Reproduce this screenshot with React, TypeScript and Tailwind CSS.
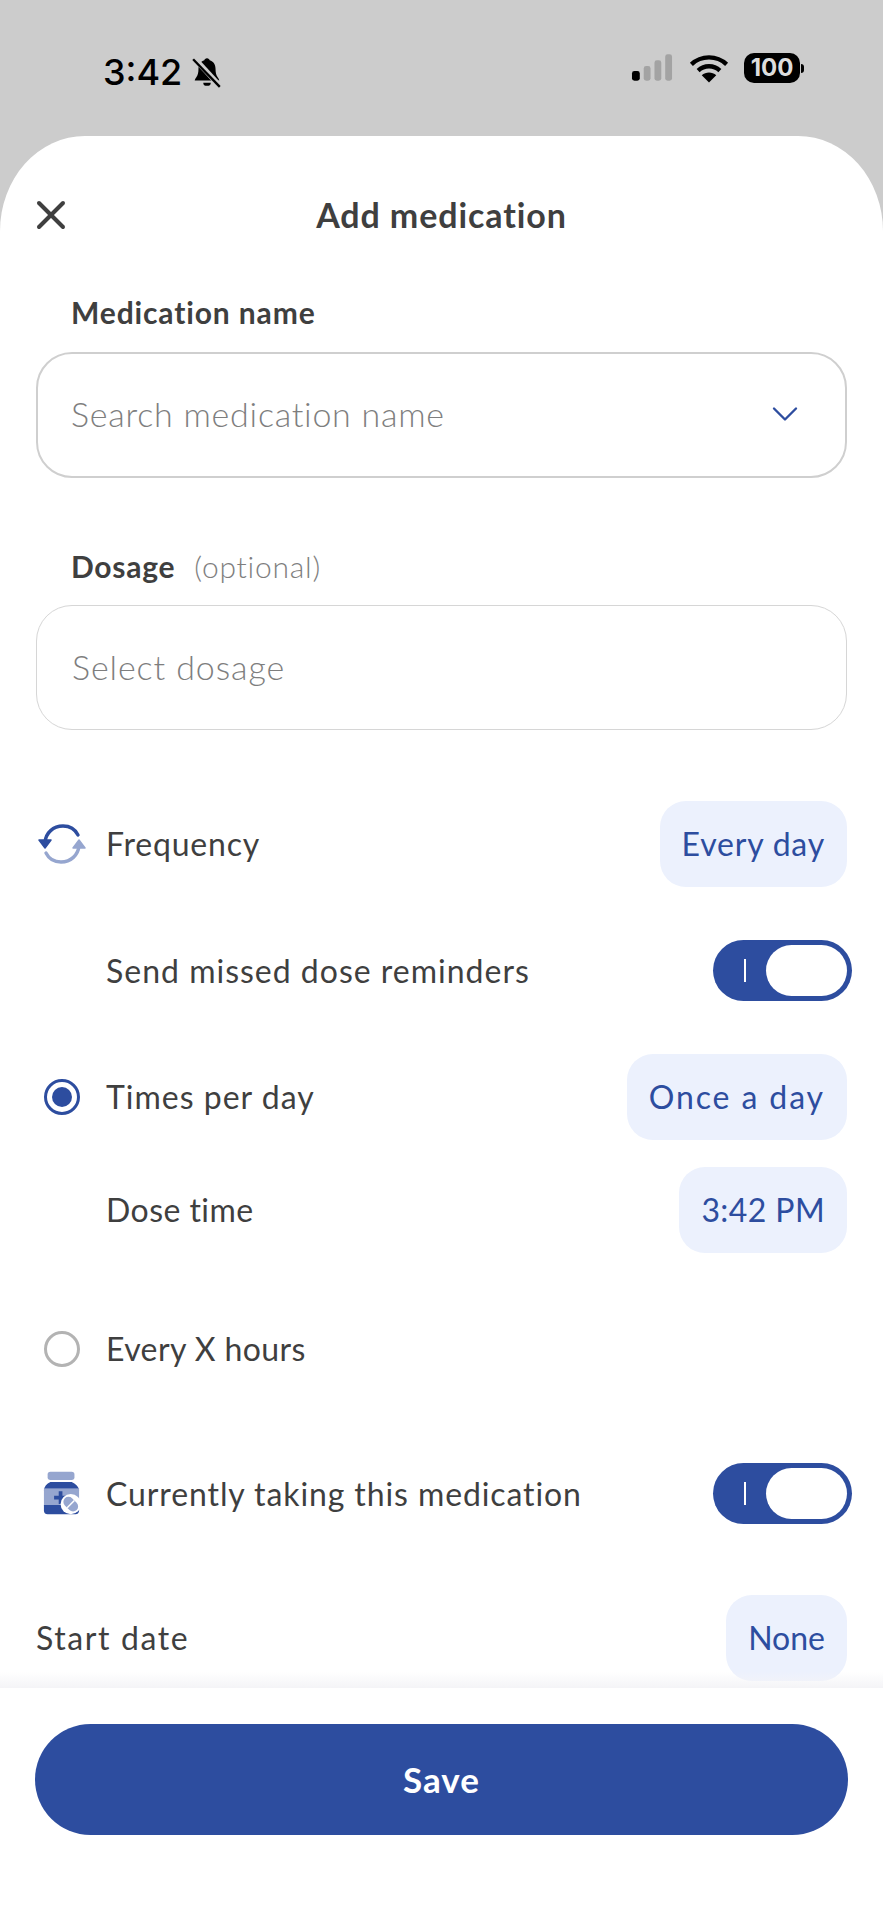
import { X, ChevronDown } from 'lucide-react';

const BLUE = 'text-[#2d4d9f]';

const Pill = ({ children, className }: { children: string; className?: string }) => (
  <div className={`h-[86px] px-[22px] flex items-center rounded-[26px] bg-[#ecf1fd] text-[32px] ${BLUE} ${className ?? ''}`}>{children}</div>
);

const Toggle = () => (
  <div className="relative w-[139px] h-[61px] -mr-[5px] rounded-full bg-[#2d4d9f] flex items-center justify-end pr-[5px]">
    <span className="absolute left-[31px] top-[19px] w-[2px] h-[23px] bg-white" />
    <span className="w-[81px] h-[51px] rounded-full bg-white" />
  </div>
);

const IconSlot = ({ children }: { children?: React.ReactNode }) => (
  <div className="w-[70px] shrink-0 flex items-center justify-center pr-[18px]">{children}</div>
);

const RepeatIcon = () => (
  <svg width="48" height="48" viewBox="0 0 48 48" fill="none">
    <path d="M40 15C37 9 31 6 25 6 15 6 8 13 7 22" stroke="#2d4d9f" strokeWidth="3.4" strokeLinecap="round" />
    <path d="M1 20h12l-6 8z" fill="#2d4d9f" stroke="#2d4d9f" strokeWidth="1.5" strokeLinejoin="round" />
    <path d="M8 33c3 6 9 9 15 9 10 0 17-7 18-16" stroke="#96a6cf" strokeWidth="3.4" strokeLinecap="round" />
    <path d="M35 28h12l-6-8z" fill="#96a6cf" stroke="#96a6cf" strokeWidth="1.5" strokeLinejoin="round" />
  </svg>
);

const BottleIcon = () => (
  <svg className="-ml-[2px] -mt-[2px]" width="37" height="44" viewBox="0 0 40 46">
    <rect x="5" y="0" width="29" height="9" rx="3" fill="#96a6cf" />
    <path d="M8 11h23c4 2 8 5 8 10H1c0-5 3-8 7-10z" fill="#2d4d9f" />
    <rect x="1" y="18" width="38" height="19" fill="#96a6cf" />
    <path d="M1 36h38v6a4 4 0 0 1-4 4H5a4 4 0 0 1-4-4z" fill="#2d4d9f" />
    <path d="M17 21h4v5h5v4h-5v5h-4v-5h-5v-4h5z" fill="#2d4d9f" />
    <circle cx="30" cy="35" r="11" fill="#fff" />
    <g transform="rotate(45 30 35)">
      <rect x="21" y="29.5" width="18" height="11" rx="5.5" fill="#96a6cf" />
      <rect x="29.2" y="29.5" width="1.6" height="11" fill="#fff" />
    </g>
  </svg>
);

const BellOffIcon = () => (
  <svg width="32" height="32" viewBox="0 0 30 30">
    <path d="M15 2c1.4 0 2.3.9 2.5 2 3.5 1 5.500 4 5.500 8 0 3 .5 6 2 8 1 1.200 1.500 2.500 1.500 3H3.500c0-.5.5-1.800 1.500-3 1.500-2 2-5 2-8 0-4 2-7 5.500-8 .2-1.100 1.100-2 2.500-2z" fill="#000" />
    <path d="M11.500 25h7a3.500 3 0 0 1-7 0z" fill="#000" />
    <path d="M3 2l24 26" stroke="#ccc" strokeWidth="5" />
    <path d="M2 3l25 26" stroke="#000" strokeWidth="2.200" />
  </svg>
);

const SignalIcon = () => (
  <svg width="43" height="28" viewBox="0 0 44 28">
    <rect x="1" y="17" width="8" height="10" rx="2.500" fill="#000" />
    <rect x="13" y="12" width="7" height="15" rx="2.500" fill="#a3a3a3" />
    <rect x="24" y="6" width="7" height="21" rx="2.500" fill="#a3a3a3" />
    <rect x="35" y="0" width="7" height="27" rx="2.500" fill="#a3a3a3" />
  </svg>
);

const WifiIcon = () => (
  <svg width="40" height="29" viewBox="0 0 38 28" fill="none">
    <path d="M2 10c9.500-9 24.500-9 34 0" stroke="#000" strokeWidth="4.200" />
    <path d="M8.500 16c6-5.500 15-5.500 21 0" stroke="#000" strokeWidth="4.200" />
    <path d="M12 20.500c4-3.400 10-3.400 14 0L19 27.500z" fill="#000" />
  </svg>
);

export default function App() {
  return (
    <div className="h-[1920px] overflow-hidden bg-[#cccccc] font-['Lato',sans-serif] text-[#3f3f3f]">
      {/* status bar */}
      <div className="h-[136px] flex items-start justify-between pt-[53px] pl-[103px] pr-[79px]">
        <div className="flex items-center gap-[9px]">
          <span className="text-[36px] leading-[38px] font-medium text-black font-['Inter',sans-serif]">3:42</span>
          <BellOffIcon />
        </div>
        <div className="flex items-center gap-[15px]">
          <SignalIcon />
          <WifiIcon />
          <div className="flex items-center">
            <div className="w-[56px] h-[30px] rounded-[10px] bg-black text-[#dddddd] text-[24px] leading-[30px] font-bold text-center font-['Inter',sans-serif]">100</div>
            <span className="w-[3px] h-[9px] ml-[1px] rounded-r-full bg-black" />
          </div>
        </div>
      </div>

      {/* sheet */}
      <div className="h-[1784px] rounded-t-[85px_95px] bg-white pt-[50px] flex flex-col">
        <div className="relative h-[58px] flex items-center justify-center pb-[2px]">
          <X className="absolute left-[27px] top-[5px] w-[48px] h-[48px] text-[#3f3f3f]" strokeWidth={2} />
          <span className="text-[34px] font-bold tracking-[0.9px]">Add medication</span>
        </div>

        <div className="flex-1 px-[36px] flex flex-col">
          <div className="mt-[49px] h-[40px] pl-[35px] pb-[2px] flex items-center text-[30px] font-bold tracking-[0.87px]">Medication name</div>
          <div className="mt-[19px] h-[126px] pl-[33px] pr-[38px] pb-[3px] flex items-center justify-between rounded-[36px] border-2 border-[#cfcfcf] text-[34px] text-[#7e7e7e] font-light tracking-[0.75px]">
            <span>Search medication name</span>
            <ChevronDown className="w-[44px] h-[44px] text-[#2d4d9f]" strokeWidth={1.3} />
          </div>

          <div className="mt-[69px] h-[40px] pl-[35px] pb-[2px] flex items-center text-[30px] tracking-[0.75px]">
            <span className="font-bold">Dosage</span>
            <span className="ml-[19px] font-light text-[#7e7e7e]">(optional)</span>
          </div>
          <div className="mt-[18px] h-[125px] pl-[35px] pb-[3px] flex items-center rounded-[36px] border border-[#d6d6d6] text-[34px] text-[#7e7e7e] font-light tracking-[0.9px]">
            Select dosage
          </div>

          <div className="mt-[71px] h-[86px] flex items-center justify-between text-[32px]">
            <div className="flex items-center">
              <IconSlot><RepeatIcon /></IconSlot>
              <span className="tracking-[0.8px]">Frequency</span>
            </div>
            <Pill className="tracking-[0.8px]">Every day</Pill>
          </div>

          <div className="mt-[53px] h-[61px] flex items-center justify-between text-[32px]">
            <div className="flex items-center">
              <IconSlot />
              <span className="tracking-[1px]">Send missed dose reminders</span>
            </div>
            <Toggle />
          </div>

          <div className="mt-[53px] h-[86px] flex items-center justify-between text-[32px]">
            <div className="flex items-center">
              <IconSlot>
                <span className="w-[36px] h-[36px] rounded-full border-[3px] border-[#2d4d9f] flex items-center justify-center">
                  <span className="w-[20px] h-[20px] rounded-full bg-[#2d4d9f]" />
                </span>
              </IconSlot>
              <span className="tracking-[1px]">Times per day</span>
            </div>
            <Pill className="tracking-[1.9px]">Once a day</Pill>
          </div>

          <div className="mt-[27px] h-[86px] flex items-center justify-between text-[32px]">
            <div className="flex items-center">
              <IconSlot />
              <span className="tracking-[0.45px]">Dose time</span>
            </div>
            <Pill className="tracking-[0.4px]">3:42 PM</Pill>
          </div>

          <div className="mt-[66px] h-[60px] flex items-center text-[32px]">
            <IconSlot>
              <span className="w-[36px] h-[36px] rounded-full border-[3px] border-[#b3b3b3]" />
            </IconSlot>
            <span className="tracking-[0.4px]">Every X hours</span>
          </div>

          <div className="mt-[84px] h-[61px] flex items-center justify-between text-[32px]">
            <div className="flex items-center">
              <IconSlot><BottleIcon /></IconSlot>
              <span className="tracking-[0.9px]">Currently taking this medication</span>
            </div>
            <Toggle />
          </div>

          <div className="mt-[71px] h-[86px] flex items-center justify-between text-[32px]">
            <span className="tracking-[1.6px]">Start date</span>
            <Pill>None</Pill>
          </div>
        </div>

        {/* footer */}
        <div className="relative h-[232px] bg-white px-[35px] pt-[36px]">
          <div className="absolute left-0 right-0 -top-[16px] h-[16px] bg-gradient-to-b from-transparent to-[#f4f4f7]" />
          <div className="h-[111px] rounded-full bg-[#2d4d9f] flex items-center justify-center text-[35px] font-bold tracking-[1px] text-white">
            Save
          </div>
        </div>
      </div>
    </div>
  );
}
